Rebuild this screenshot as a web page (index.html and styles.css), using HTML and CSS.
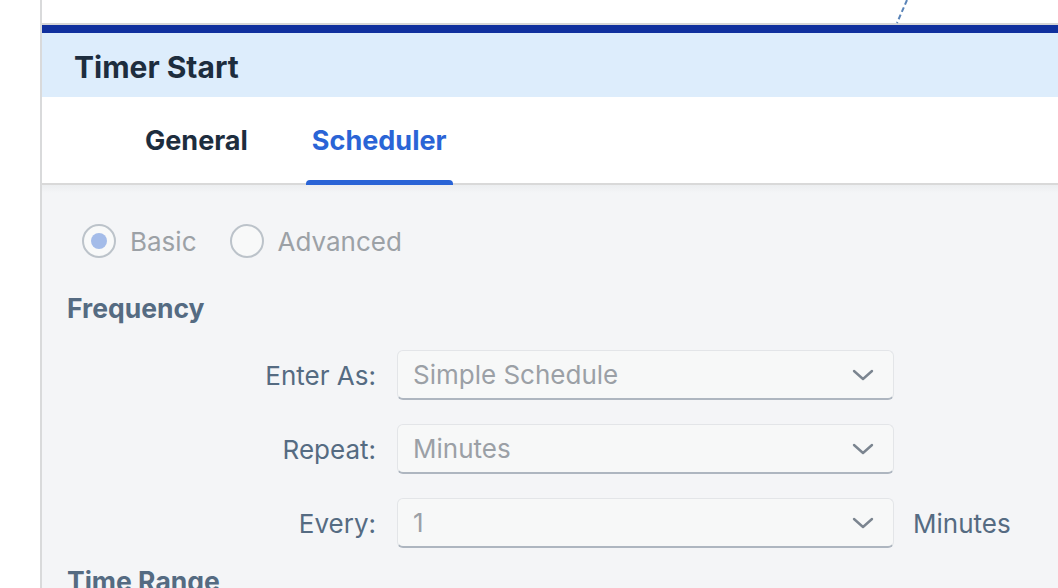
FILE: index.html
```html
<!DOCTYPE html>
<html>
<head>
<meta charset="utf-8">
<link rel="stylesheet" href="styles.css">
</head>
<body>
<div class="page">
  <div class="gutter"></div>
  <div class="panel">
    <div class="canvas-top">
      <svg class="connector" width="20" height="24" viewBox="0 0 20 24"><line x1="12" y1="0" x2="2" y2="23" stroke="#5a84b8" stroke-width="2" stroke-dasharray="5 3"/></svg>
    </div>
    <div class="accent"></div>
    <div class="header"><h1 class="title">Timer Start</h1></div>
    <div class="tabs">
      <div class="tab">General</div>
      <div class="tab active">Scheduler</div>
    </div>
    <div class="content">
      <div class="radios">
        <label class="radio"><span class="circle checked"></span><span class="rlabel">Basic</span></label>
        <label class="radio"><span class="circle"></span><span class="rlabel">Advanced</span></label>
      </div>
      <h2 class="section">Frequency</h2>
      <div class="form">
        <div class="label">Enter As:</div>
        <div class="select"><span>Simple Schedule</span><svg class="chev" width="22" height="12" viewBox="0 0 22 12"><path d="M2 2 L11 10 L20 2" fill="none" stroke="#7b8590" stroke-width="2.4" stroke-linecap="round" stroke-linejoin="round"/></svg></div>
        <div></div>
        <div class="label">Repeat:</div>
        <div class="select"><span>Minutes</span><svg class="chev" width="22" height="12" viewBox="0 0 22 12"><path d="M2 2 L11 10 L20 2" fill="none" stroke="#7b8590" stroke-width="2.4" stroke-linecap="round" stroke-linejoin="round"/></svg></div>
        <div></div>
        <div class="label">Every:</div>
        <div class="select"><span>1</span><svg class="chev" width="22" height="12" viewBox="0 0 22 12"><path d="M2 2 L11 10 L20 2" fill="none" stroke="#7b8590" stroke-width="2.4" stroke-linecap="round" stroke-linejoin="round"/></svg></div>
        <div class="unit">Minutes</div>
      </div>
      <h2 class="section range">Time Range</h2>
    </div>
  </div>
</div>
</body>
</html>
```
FILE: styles.css
```css
html, body {
  margin: 0;
  padding: 0;
  background: #ffffff;
  font-family: "Inter", "Noto Sans", sans-serif;
  overflow: hidden;
}
.page {
  display: flex;
  width: 1058px;
  height: 588px;
  overflow: hidden;
}
.gutter {
  width: 40px;
  flex: none;
  background: #ffffff;
}
.panel {
  flex: 1;
  border-left: 2px solid #d9dadb;
  display: flex;
  flex-direction: column;
  background: #f4f5f7;
  min-width: 0;
}
.canvas-top {
  flex: none;
  height: 23px;
  background: #ffffff;
  border-bottom: 2px solid #d6d6d6;
  position: relative;
}
.connector {
  position: absolute;
  left: 853px;
  top: 0;
}
.accent {
  flex: none;
  height: 8px;
  background: #10309e;
}
.header {
  flex: none;
  height: 64px;
  box-sizing: border-box;
  padding-top: 3px;
  background: #ddedfc;
  display: flex;
  align-items: center;
  padding-left: 32px;
}
.title {
  margin: 0;
  font-size: 30px;
  font-weight: 700;
  color: #1d2d3e;
}
.tabs {
  flex: none;
  height: 86px;
  background: #ffffff;
  border-bottom: 2px solid #d9d9d9;
  display: flex;
  padding-left: 97px;
}
.tab {
  position: relative;
  display: flex;
  align-items: center;
  padding: 0 6px;
  margin-right: 52px;
  font-size: 27px;
  font-weight: 700;
  color: #1d2d3e;
}
.tab.active {
  color: #2a64d6;
}
.tab.active::after {
  content: "";
  position: absolute;
  left: 0;
  right: 0;
  bottom: -2px;
  height: 5px;
  background: #2a64d6;
  border-radius: 4px 4px 0 0;
}
.content {
  flex: none;
  padding: 39px 0 0 25px;
  background: linear-gradient(#eceef0, #f4f5f7 8px);
}
.radios {
  display: flex;
  gap: 33px;
  padding-left: 15px;
}
.radio {
  display: flex;
  align-items: center;
  gap: 14px;
}
.circle {
  width: 30px;
  height: 30px;
  border: 2px solid #bcc3ca;
  border-radius: 50%;
  background: #f8f9f9;
  display: flex;
  align-items: center;
  justify-content: center;
}
.circle.checked::before {
  content: "";
  width: 16px;
  height: 16px;
  border-radius: 50%;
  background: #a4bce9;
}
.rlabel {
  font-size: 26px;
  color: #9ca1a6;
}
.section {
  margin: 34px 0 0 0;
  font-size: 26.5px;
  font-weight: 700;
  color: #556b82;
}
.form {
  display: grid;
  grid-template-columns: 309px 497px auto;
  column-gap: 21px;
  row-gap: 24px;
  margin-top: 26px;
  align-items: center;
}
.label {
  text-align: right;
  font-size: 26px;
  color: #556b82;
}
.select {
  height: 50px;
  box-sizing: border-box;
  border: 1px solid #e3e5e8;
  border-bottom: 2px solid #aeb6c0;
  border-radius: 6px;
  background: #f7f8f8;
  display: flex;
  align-items: center;
  justify-content: space-between;
  padding: 0 19px 0 15px;
  font-size: 26px;
  color: #9ba0a6;
}
.unit {
  font-size: 26px;
  color: #556b82;
  margin-left: -2px;
}
.section.range {
  margin-top: 17px;
}
```
